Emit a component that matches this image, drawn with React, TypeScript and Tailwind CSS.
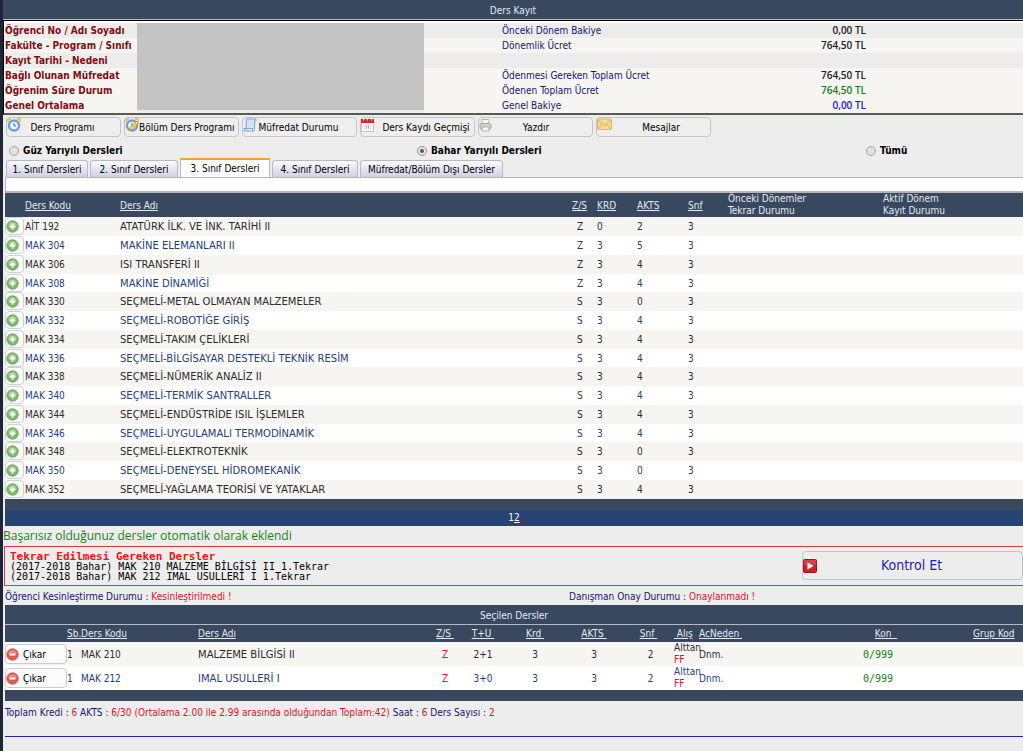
import { ReactNode, useState } from "react";

const infoRows = [
  { label: "Öğrenci No / Adı Soyadı", fee: "Önceki Dönem Bakiye", amount: "0,00 TL", color: "text-[#222]", bg: "bg-[#ececec]" },
  { label: "Fakülte - Program / Sınıfı", fee: "Dönemlik Ücret", amount: "764,50 TL", color: "text-[#222]", bg: "bg-[#f6f5f2]" },
  { label: "Kayıt Tarihi - Nedeni", fee: "", amount: "", color: "", bg: "bg-[#ececec]" },
  { label: "Bağlı Olunan Müfredat", fee: "Ödenmesi Gereken Toplam Ücret", amount: "764,50 TL", color: "text-[#222]", bg: "bg-[#f6f5f2]" },
  { label: "Öğrenim Süre Durum", fee: "Ödenen Toplam Ücret", amount: "764,50 TL", color: "text-[#128012]", bg: "bg-[#f6f5f2]" },
  { label: "Genel Ortalama", fee: "Genel Bakiye", amount: "0,00 TL", color: "text-[#1818d8]", bg: "bg-[#f6f5f2]" },
];

const courses = [
  ["AİT 192", "ATATÜRK İLK. VE İNK. TARİHİ II", "Z", "0", "2"],
  ["MAK 304", "MAKİNE ELEMANLARI II", "Z", "3", "5"],
  ["MAK 306", "ISI TRANSFERİ II", "Z", "3", "4"],
  ["MAK 308", "MAKİNE DİNAMİĞİ", "Z", "3", "4"],
  ["MAK 330", "SEÇMELİ-METAL OLMAYAN MALZEMELER", "S", "3", "0"],
  ["MAK 332", "SEÇMELİ-ROBOTİĞE GİRİŞ", "S", "3", "4"],
  ["MAK 334", "SEÇMELİ-TAKIM ÇELİKLERİ", "S", "3", "4"],
  ["MAK 336", "SEÇMELİ-BİLGİSAYAR DESTEKLİ TEKNİK RESİM", "S", "3", "4"],
  ["MAK 338", "SEÇMELİ-NÜMERİK ANALİZ II", "S", "3", "4"],
  ["MAK 340", "SEÇMELİ-TERMİK SANTRALLER", "S", "3", "4"],
  ["MAK 344", "SEÇMELİ-ENDÜSTRİDE ISIL İŞLEMLER", "S", "3", "4"],
  ["MAK 346", "SEÇMELİ-UYGULAMALI TERMODİNAMİK", "S", "3", "4"],
  ["MAK 348", "SEÇMELİ-ELEKTROTEKNİK", "S", "3", "0"],
  ["MAK 350", "SEÇMELİ-DENEYSEL HİDROMEKANİK", "S", "3", "0"],
  ["MAK 352", "SEÇMELİ-YAĞLAMA TEORİSİ VE YATAKLAR", "S", "3", "4"],
];

const selected = [
  { code: "MAK 210", name: "MALZEME BİLGİSİ II", tu: "2+1" },
  { code: "MAK 212", name: "IMAL USULLERİ I", tu: "3+0" },
];

const tabs = [
  { label: "1. Sınıf Dersleri", width: "w-[82px]" },
  { label: "2. Sınıf Dersleri", width: "w-[88px]" },
  { label: "3. Sınıf Dersleri", width: "w-[90px]" },
  { label: "4. Sınıf Dersleri", width: "w-[86px]" },
  { label: "Müfredat/Bölüm Dışı Dersler", width: "w-[143px]" },
];

const terms = ["Güz Yarıyılı Dersleri", "Bahar Yarıyılı Dersleri", "Tümü"];

function ClockIcon({ pencil = false }: { pencil?: boolean }) {
  return (
    <svg width="14" height="14" viewBox="0 0 14 14">
      <path d="M1 4V1h3M10 1h3v3" fill="none" stroke="#efc25c" strokeWidth="2" />
      <circle cx="7" cy="7.500" r="5" fill="#f4faff" stroke="#6aa0d8" strokeWidth="2.400" />
      <path d="M7 5v3h2" fill="none" stroke="#46688e" />
      {pencil && <path d="M4 12.500l1-3L11.500 3l2 2L7 11.500z" fill="#f5cf58" stroke="#bd8e2c" strokeWidth=".8" />}
    </svg>
  );
}

function ScrollIcon() {
  return (
    <svg width="14" height="14" viewBox="0 0 14 14">
      <path d="M3.500 1h9.500v2h-1.500v8.500a1.500 1.500 0 0 1-1.500 1.500H1v-2.500h2z" fill="#cfe3fa" stroke="#78a5dc" />
      <path d="M1 10.500h8.500V13" fill="#eef6ff" stroke="#78a5dc" />
    </svg>
  );
}

function CalendarIcon() {
  return (
    <svg width="13" height="14" viewBox="0 0 13 14">
      <rect x=".5" y="2" width="12" height="11.500" fill="#fafafa" stroke="#c3c3c3" />
      <path d="M0 1h13v4H0z" fill="#d8262b" />
      <path d="M2.500 0v2.500M6.500 0v2.500M10.500 0v2.500" stroke="#fff" />
      <path d="M3 8h7M3 10.500h7" stroke="#d4d4d4" strokeDasharray="1 1" />
      <path d="M5.500 7v4M7.500 7v4" stroke="#b5b5b5" />
    </svg>
  );
}

function PrinterIcon() {
  return (
    <svg width="13" height="14" viewBox="0 0 13 14">
      <path d="M3 6V1.500h7V6" fill="#f6f6f6" stroke="#b0b0b0" />
      <rect x="1" y="5.500" width="11" height="5.500" rx="1.500" fill="#d2d2d2" stroke="#a2a2a2" />
      <path d="M3 9h7v4H3z" fill="#f8f8f8" stroke="#b0b0b0" />
    </svg>
  );
}

function MailIcon() {
  return (
    <svg width="15" height="13" viewBox="0 0 15 13">
      <rect x=".5" y="1" width="14" height="10.500" rx="1" fill="#f6dc91" stroke="#dcb75e" />
      <path d="M1 2l6.500 5.500L14 2M1 11l4.500-5M14 11L9.500 6" fill="none" stroke="#d8b25c" />
    </svg>
  );
}

function RoundIcon({ plus = false }: { plus?: boolean }) {
  return (
    <svg width="13" height="13" viewBox="0 0 13 13" className="shrink-0">
      <circle cx="6.500" cy="6.500" r="5.800" fill={plus ? "#78b865" : "#e05a52"} stroke={plus ? "#6aa95b" : "#cf5c57"} strokeWidth=".8" />
      <path d="M2 5.500a4.700 4.700 0 0 1 9 0z" fill="#fff" opacity=".3" />
      <path d={plus ? "M6.500 3.500v6M3.500 6.500h6" : "M3.500 6.500h6"} stroke="#fff" strokeWidth="2" />
    </svg>
  );
}

const toolbar: { label: string; icon: ReactNode; labelClass: string }[] = [
  { label: "Ders Programı", icon: <ClockIcon />, labelClass: "flex-1 pr-4" },
  { label: "Bölüm Ders Programı", icon: <ClockIcon pencil />, labelClass: "" },
  { label: "Müfredat Durumu", icon: <ScrollIcon />, labelClass: "flex-1 pr-4" },
  { label: "Ders Kaydı Geçmişi", icon: <CalendarIcon />, labelClass: "flex-1 pl-1" },
  { label: "Yazdır", icon: <PrinterIcon />, labelClass: "flex-1 pr-3" },
  { label: "Mesajlar", icon: <MailIcon />, labelClass: "flex-1" },
];

function SortLink({ children }: { children: ReactNode }) {
  return (
    <a href="#" className="underline whitespace-pre">
      {children}
    </a>
  );
}

function StudentInfo() {
  return (
    <div className="border-t border-l border-b-2 border-t-black border-l-black border-b-[#555a55] bg-white pt-[2px]">
      <table className="w-full table-fixed border-collapse">
        <colgroup>
          <col className="w-[133px]" />
          <col className="w-[287px]" />
          <col className="w-[78px]" />
          <col className="w-[208px]" />
          <col className="w-[156px]" />
          <col />
        </colgroup>
        <tbody>
          {infoRows.map((row, i) => (
            <tr key={row.label} className={`h-[15px] ${row.bg}`}>
              <th scope="row" className="pl-px text-left font-bold text-[#800d12] whitespace-nowrap">{row.label}</th>
              {i === 0 && (
                <td rowSpan={6} className="align-top">
                  <div className="h-[87px] bg-[#c3c3c3]" />
                </td>
              )}
              <td />
              <td className="text-[#15156e] whitespace-nowrap">{row.fee}</td>
              <td className={`text-right font-semibold font-['Open_Sans',sans-serif] ${row.color}`}>{row.amount}</td>
              <td />
            </tr>
          ))}
        </tbody>
      </table>
    </div>
  );
}

function CourseTable() {
  return (
    <table className="w-full table-fixed border-collapse">
      <colgroup>
        <col className="w-[20px]" />
        <col className="w-[95px]" />
        <col />
        <col className="w-[25px]" />
        <col className="w-[40px]" />
        <col className="w-[51px]" />
        <col className="w-[40px]" />
        <col className="w-[155px]" />
        <col className="w-[140px]" />
      </colgroup>
      <thead>
        <tr className="h-6 bg-[#37485f] text-left text-[#e4eaf2] [&>th]:font-normal">
          <th />
          <th><SortLink>Ders Kodu</SortLink></th>
          <th><SortLink>Ders Adı</SortLink></th>
          <th><SortLink>Z/S</SortLink></th>
          <th><SortLink>KRD</SortLink></th>
          <th><SortLink>AKTS</SortLink></th>
          <th><SortLink>Snf</SortLink></th>
          <th className="leading-3">Önceki Dönemler<br />Tekrar Durumu</th>
          <th className="leading-3">Aktif Dönem<br />Kayıt Durumu</th>
        </tr>
      </thead>
      <tbody className="[&>tr:nth-child(4n)]:h-[18px]">
        {courses.map(([code, name, type, credit, akts], i) => (
          <tr key={code} className={`h-[19px] ${i % 2 ? "bg-white text-[#22407a]" : "bg-[#f6f5f2] text-[#2b2b2b]"}`}>
            <td className="align-top">
              <button aria-label={`${code} ekle`} className="flex h-[18px] w-[19px] items-center rounded-sm border border-[#cfcfd4] bg-[#fbfbfb]">
                <RoundIcon plus />
              </button>
            </td>
            <td>{code}</td>
            <td className="font-['DejaVu_Sans',sans-serif] whitespace-nowrap">{name}</td>
            <td className="pl-[5px]">{type}</td>
            <td>{credit}</td>
            <td>{akts}</td>
            <td>3</td>
            <td />
            <td />
          </tr>
        ))}
      </tbody>
      <tfoot>
        <tr className="h-[11px] bg-[#37485f]">
          <td colSpan={9} />
        </tr>
      </tfoot>
    </table>
  );
}

function SelectedTable() {
  return (
    <table className="w-full table-fixed border-collapse">
      <colgroup>
        <col className="w-[62px]" />
        <col className="w-[14px]" />
        <col className="w-[117px]" />
        <col />
        <col className="w-[30px]" />
        <col className="w-[46px]" />
        <col className="w-[58px]" />
        <col className="w-[60px]" />
        <col className="w-[49px]" />
        <col className="w-[26px]" />
        <col className="w-[131px]" />
        <col className="w-[96px]" />
        <col className="w-[97px]" />
      </colgroup>
      <thead>
        <tr className="h-[17px] bg-[#37485f] text-left text-[#e4eaf2] [&>th]:font-normal">
          <th />
          <th className="whitespace-nowrap"><SortLink>Sb.</SortLink></th>
          <th><SortLink>Ders Kodu</SortLink></th>
          <th><SortLink>Ders Adı</SortLink></th>
          <th className="text-center"><SortLink>{"Z/S\u00a0"}</SortLink></th>
          <th className="text-center"><SortLink>{"T+U\u00a0"}</SortLink></th>
          <th className="text-center"><SortLink>{"Krd\u00a0"}</SortLink></th>
          <th className="text-center"><SortLink>{"AKTS\u00a0"}</SortLink></th>
          <th className="text-center"><SortLink>{"Snf\u00a0"}</SortLink></th>
          <th className="pl-px"><SortLink>{"\u00a0Alış"}</SortLink></th>
          <th><SortLink>{"AcNeden\u00a0"}</SortLink></th>
          <th className="pl-4 text-center"><SortLink>{"Kon\u00a0\u00a0"}</SortLink></th>
          <th className="pl-[47px] whitespace-nowrap"><SortLink>Grup Kod</SortLink></th>
        </tr>
      </thead>
      <tbody>
        {selected.map((row, i) => (
          <tr key={row.code} className={`h-6 [&>td]:text-center ${i % 2 ? "bg-white text-[#22407a]" : "bg-[#f6f5f2] text-[#2b2b2b]"}`}>
            <td>
              <button className="flex h-5 w-[62px] items-center gap-1 rounded-sm border border-[#c6ccd4] bg-[#fbfbfb] text-black">
                <RoundIcon />
                Çıkar
              </button>
            </td>
            <td className="text-left!">1</td>
            <td className="text-left!">{row.code}</td>
            <td className="text-left! font-['DejaVu_Sans',sans-serif]">{row.name}</td>
            <td className="text-[#e0121f]">Z</td>
            <td>{row.tu}</td>
            <td>3</td>
            <td>3</td>
            <td className="pl-1">2</td>
            <td className="pl-px text-left! leading-3">
              Alttan
              <br />
              <span className="text-[#e0121f]">FF</span>
            </td>
            <td className="text-left!">Dnm.</td>
            <td className="font-['DejaVu_Sans_Mono',monospace] text-[#128012]">0/999</td>
            <td />
          </tr>
        ))}
      </tbody>
      <tfoot>
        <tr className="h-[11px] bg-[#37485f]">
          <td colSpan={13} />
        </tr>
      </tfoot>
    </table>
  );
}

export default function App() {
  const [tab, setTab] = useState(2);
  const [term, setTerm] = useState(1);

  return (
    <div className="min-h-screen border-l-[3px] border-[#1c2636] bg-[#ededed] font-['DejaVu_Sans_Condensed','DejaVu_Sans',sans-serif] text-[10px] leading-[15px] text-black">
      <h1 className="h-5 border-b border-[#b4bac0] bg-[#37485f] pt-[3px] text-center text-[#e4eaf2]">Ders Kayıt</h1>
      <StudentInfo />

      <div className="flex gap-[3px] pt-[2px] pl-[3px]">
        {toolbar.map((item) => (
          <button key={item.label} className="flex h-5 w-[115px] rounded-sm border border-[#c4c4c4] bg-[#eeeeee] whitespace-nowrap">
            {item.icon}
            <span className={`pt-[2px] ${item.labelClass}`}>{item.label}</span>
          </button>
        ))}
      </div>

      <div className="grid grid-cols-[408fr_449fr_157fr] pt-[5px] pl-[6px] font-bold">
        {terms.map((label, i) => (
          <label key={label} className="flex h-[17px] items-center gap-1">
            <input
              type="radio"
              name="term"
              checked={term === i}
              onChange={() => setTerm(i)}
              className="size-[10px] appearance-none rounded-full border border-[#a3a3a3] bg-[#e2e2e2] checked:bg-[#555] checked:shadow-[inset_0_0_0_2px_#ececec]"
            />
            {label}
          </label>
        ))}
      </div>

      <div className="flex h-[18px] items-end gap-[2px] pl-[3px]">
        {tabs.map((item, i) => (
          <button
            key={item.label}
            onClick={() => setTab(i)}
            className={`whitespace-nowrap ${item.width} ${
              tab === i
                ? "h-[19px] border-x border-t-2 border-x-[#b9b9c4] border-t-[#f0a52c] bg-white"
                : "h-[17px] rounded-t-sm border border-b-0 border-[#b9b9c4] bg-linear-to-b from-[#fbfbff] to-[#cfd0e4]"
            }`}
          >
            {item.label}
          </button>
        ))}
      </div>

      <div className="pl-[2px]">
        <div className="h-4 border-t border-b-2 border-l border-[#b5b5b5] bg-white" />
        <CourseTable />
        <nav className="h-4 bg-[#264573] text-center text-white">
          1<a href="#" className="underline">2</a>
        </nav>
      </div>

      <p className="h-5 font-['Open_Sans',sans-serif] text-[12px] leading-5 text-[#168416]">Başarısız olduğunuz dersler otomatik olarak eklendi</p>

      <section className="ml-px flex h-10 justify-between border border-r-0 border-[#d93a4a]">
        <div className="pt-[5px] pl-[5px] font-['DejaVu_Sans_Mono',monospace] leading-[10px]">
          <h2 className="text-[11px] font-bold text-[#f01414]">Tekrar Edilmesi Gereken Dersler</h2>
          <p>(2017-2018 Bahar) MAK 210 MALZEME BİLGİSİ II 1.Tekrar</p>
          <p>(2017-2018 Bahar) MAK 212 IMAL USULLERİ I 1.Tekrar</p>
        </div>
        <button className="mt-1 flex h-[29px] w-[221px] items-center rounded-sm border border-[#b9c7d0] text-[14px] text-[#1f1fb4]">
          <svg width="14" height="14" viewBox="0 0 14 14">
            <rect x=".5" y=".5" width="13" height="13" rx="1" fill="#c9222a" stroke="#a3151d" />
            <path d="M1 1h12v5H1z" fill="#fff" opacity=".15" />
            <path d="M4.500 3.500l6 3.500-6 3.500z" fill="#fff" />
          </svg>
          <span className="flex-1 pr-4">Kontrol Et</span>
        </button>
      </section>

      <div className="flex h-[19px] pt-[3px] pl-[2px] text-[#15156e]">
        <p className="w-[564px]">
          Öğrenci Kesinleştirme Durumu : <span className="text-[#e0121f]">Kesinleştirilmedi !</span>
        </p>
        <p>
          Danışman Onay Durumu : <span className="text-[#e0121f]">Onaylanmadı !</span>
        </p>
      </div>

      <div className="pl-[2px]">
        <h2 className="h-5 border-b border-[#b4bac0] bg-[#37485f] pt-[3px] text-center text-[#e4eaf2]">Seçilen Dersler</h2>
        <SelectedTable />
      </div>

      <p className="ml-[2px] h-9 border-b border-[#2222b0] pt-1 text-[#15156e]">
        Toplam Kredi : <span className="text-[#e0121f]">6</span> AKTS :{" "}
        <span className="text-[#e0121f]">6/30 (Ortalama 2.00 ile 2.99 arasında olduğundan Toplam:42)</span> Saat :{" "}
        <span className="text-[#e0121f]">6</span> Ders Sayısı : <span className="text-[#e0121f]">2</span>
      </p>
    </div>
  );
}
